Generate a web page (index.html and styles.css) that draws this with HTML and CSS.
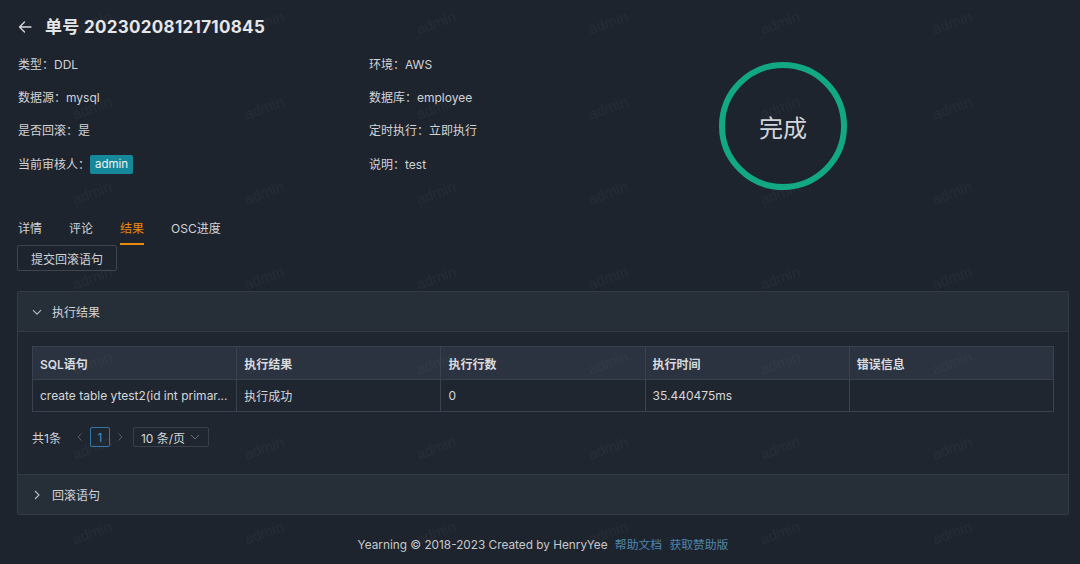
FILE: index.html
```html
<!DOCTYPE html>
<html lang="zh-CN">
<head>
<meta charset="utf-8">
<title>单号 20230208121710845</title>
<link rel="stylesheet" href="styles.css">
</head>
<body>
<div class="page">
  <header class="title-bar">
    <svg class="back" width="14" height="14" viewBox="0 0 14 14"><path d="M13 7H1.5M6.5 2L1.5 7l5 5" fill="none" stroke="#d6d9dd" stroke-width="1.3" stroke-linecap="round" stroke-linejoin="round"/></svg>
    <h1 class="title">单号 20230208121710845</h1>
  </header>

  <section class="info">
    <div class="info-grid">
      <div class="info-item">类型：DDL</div>
      <div class="info-item">环境：AWS</div>
      <div class="info-item">数据源：mysql</div>
      <div class="info-item">数据库：employee</div>
      <div class="info-item">是否回滚：是</div>
      <div class="info-item">定时执行：立即执行</div>
      <div class="info-item">当前审核人：<span class="tag">admin</span></div>
      <div class="info-item">说明：test</div>
    </div>
    <div class="status-ring"><span>完成</span></div>
  </section>

  <nav class="tabs">
    <span class="tab">详情</span>
    <span class="tab">评论</span>
    <span class="tab active">结果</span>
    <span class="tab">OSC进度</span>
  </nav>
  <button class="btn">提交回滚语句</button>

  <section class="collapse">
    <div class="panel-head open">
      <svg class="chev" width="12" height="12" viewBox="0 0 12 12"><path d="M2 4.2l4 4 4-4" fill="none" stroke="#b9bdc3" stroke-width="1.1"/></svg>
      <span>执行结果</span>
    </div>
    <div class="panel-body">
      <table class="result">
        <thead>
          <tr><th>SQL语句</th><th>执行结果</th><th>执行行数</th><th>执行时间</th><th>错误信息</th></tr>
        </thead>
        <tbody>
          <tr><td>create table ytest2(id int primar...</td><td>执行成功</td><td>0</td><td>35.440475ms</td><td></td></tr>
        </tbody>
      </table>
      <div class="pager">
        <span class="total">共1条</span>
        <span class="pg-arrow"><svg width="8" height="10" viewBox="0 0 8 10"><path d="M5.5 1.5L2 5l3.5 3.5" fill="none" stroke="#575d66" stroke-width="1"/></svg></span>
        <span class="pg-item">1</span>
        <span class="pg-arrow"><svg width="8" height="10" viewBox="0 0 8 10"><path d="M2.5 1.5L6 5 2.5 8.5" fill="none" stroke="#575d66" stroke-width="1"/></svg></span>
        <span class="pg-size">10 条/页<svg width="10" height="8" viewBox="0 0 10 8"><path d="M1 2l4 4 4-4" fill="none" stroke="#6a7079" stroke-width="1"/></svg></span>
      </div>
    </div>
    <div class="panel-head">
      <svg class="chev" width="12" height="12" viewBox="0 0 12 12"><path d="M4 2l4 4-4 4" fill="none" stroke="#b9bdc3" stroke-width="1.1"/></svg>
      <span>回滚语句</span>
    </div>
  </section>

  <footer class="footer">Yearning © 2018-2023 Created by HenryYee <a class="link">帮助文档</a> <a class="link">获取赞助版</a></footer>
</div>

<svg class="watermark" width="1080" height="564" aria-hidden="true">
  <defs>
    <pattern id="wm" patternUnits="userSpaceOnUse" x="6" y="-20" width="172" height="85">
      <text x="86" y="48" text-anchor="middle" transform="rotate(-20 86 42.5)" font-family="Liberation Sans, Arial, sans-serif" font-size="15" fill="rgba(255,255,255,0.03)">admin</text>
    </pattern>
  </defs>
  <rect width="1080" height="564" fill="url(#wm)"/>
</svg>
</body>
</html>
```

FILE: styles.css
```css
* { box-sizing: border-box; }
html, body { margin: 0; padding: 0; }
body {
  width: 1080px;
  height: 564px;
  overflow: hidden;
  background: #1e242d;
  color: #d0d3d8;
  font-family: "Inter", "Noto Sans CJK SC", sans-serif;
  font-size: 12px;
  position: relative;
}
.page {
  padding: 0 11px 0 17px;
}
.title-bar {
  height: 48px;
  padding: 17px 0 0 1px;
  display: flex;
  align-items: flex-start;
}
.back {
  margin: 3px 13px 0 0;
  flex: none;
}
.title {
  margin: 0;
  font-size: 17px;
  line-height: 20px;
  font-weight: bold;
  color: #e4e6e9;
  letter-spacing: 0.3px;
}
.info {
  display: flex;
  align-items: flex-start;
  height: 142px;
}
.info-grid {
  display: grid;
  grid-template-columns: 351px 350px;
  grid-auto-rows: 33.33px;
  padding-left: 1px;
}
.info-item {
  display: flex;
  align-items: center;
  line-height: 16px;
}
.tag {
  display: inline-block;
  height: 19px;
  line-height: 19px;
  padding: 0 5px;
  background: #15899a;
  color: #eef4f6;
  border-radius: 2px;
  font-size: 11.5px;
}
.status-ring {
  margin-top: 14px;
  width: 128px;
  height: 128px;
  border: 6px solid #12a884;
  border-radius: 50%;
  display: flex;
  align-items: center;
  justify-content: center;
  font-size: 24px;
  color: #d2d5da;
}
.tabs {
  margin-top: 22px;
  display: flex;
  padding-left: 1px;
}
.tab {
  padding: 9px 0 6px;
  line-height: 16px;
  border-bottom: 2px solid transparent;
  margin-right: 27px;
  color: #d0d3d8;
}
.tab.active {
  color: #e8890c;
  border-bottom-color: #e8890c;
}
.btn {
  display: block;
  height: 26px;
  padding: 0 13px;
  background: transparent;
  border: 1px solid #3f454d;
  border-radius: 2px;
  color: #d0d3d8;
  font: inherit;
  font-size: 12px;
}
.collapse {
  margin-top: 20px;
  border: 1px solid #343b45;
  border-radius: 2px;
}
.panel-head {
  height: 40px;
  display: flex;
  align-items: center;
  padding-left: 13px;
  background: #262e37;
  color: #d0d3d8;
}
.panel-head.open {
  border-bottom: 1px solid #343b45;
}
.panel-body + .panel-head {
  border-top: 1px solid #343b45;
}
.chev {
  margin-right: 9px;
  flex: none;
}
.panel-body {
  background: #20262f;
  padding: 14px 14px 27px;
}
.result {
  width: 100%;
  border-collapse: collapse;
  table-layout: fixed;
  border: 1px solid #3a4150;
}
.result th, .result td {
  border: 1px solid #3a4150;
  padding: 0 7px;
  text-align: left;
  white-space: nowrap;
  overflow: hidden;
  color: #d4d7db;
}
.result th {
  height: 33px;
  background: #2b3240;
  font-weight: 600;
  color: #d8dbdf;
}
.result td {
  height: 32px;
}
.pager {
  margin-top: 15px;
  display: flex;
  align-items: center;
  height: 20px;
}
.total {
  margin-right: 9px;
}
.pg-arrow {
  width: 20px;
  height: 20px;
  display: flex;
  align-items: center;
  justify-content: center;
}
.pg-item {
  width: 20px;
  height: 20px;
  border: 1px solid #2f77a6;
  border-radius: 2px;
  display: flex;
  align-items: center;
  justify-content: center;
  color: #4a8fbf;
}
.pg-size {
  margin-left: 3px;
  width: 76px;
  height: 20px;
  border: 1px solid #3a4049;
  border-radius: 2px;
  display: flex;
  align-items: center;
  justify-content: space-between;
  padding: 0 8px 0 7px;
  color: #d4d7db;
}
.footer {
  margin-top: 20px;
  line-height: 20px;
  text-align: center;
  color: #c6c9cd;
  font-size: 11.8px;
}
.link {
  color: #4f86ad;
  margin-left: 4px;
}
.watermark {
  position: absolute;
  left: 0;
  top: 0;
  pointer-events: none;
}
```
